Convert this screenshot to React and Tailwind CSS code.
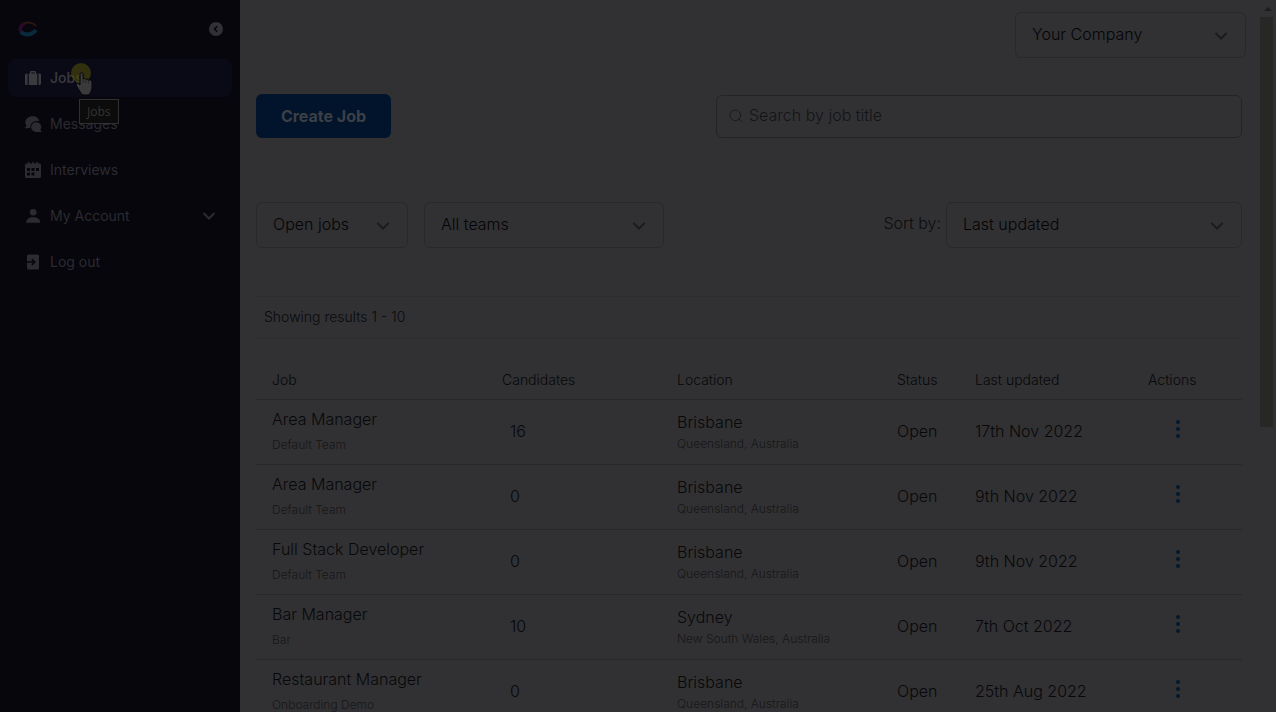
import React, { useState } from 'react';
import { Search } from 'lucide-react';

const SuitcaseIcon = () => (
    <svg viewBox="0 0 18 18" className="w-[18px] h-[18px]" fill="currentColor" aria-hidden="true">
        <path fillRule="evenodd" d="M4.700 4.500H6V3.300C6 2.500 6.500 2 7.300 2h3.400c.8 0 1.300.5 1.300 1.300v1.200h1.300V16H4.700zM7.500 4.500h3v-1h-3z" />
        <path d="M1 6a1.500 1.500 0 0 1 1.500-1.500h1V16h-1A1.500 1.500 0 0 1 1 14.500zM14.500 4.500h1A1.500 1.500 0 0 1 17 6v8.500a1.500 1.500 0 0 1-1.500 1.500h-1z" />
    </svg>
);

const MessagesIcon = () => (
    <svg viewBox="0 0 18 18" className="w-[18px] h-[18px]" fill="currentColor" aria-hidden="true">
        <path d="M8.800 1.200c3.400 0 6 2.100 6.600 5-5.400-1.400-9.400 2-9.100 6.800-.9 0-1.900.2-2.800.2H.9l-.1-.6c.9-.6 1.400-1.200 1.500-2.200-.6-1-1-2-1-3.100 0-3.400 3.400-6.100 7.500-6.100z" />
        <path d="M12.200 7.300c2.900 0 5 2.100 5 4.700 0 1-.3 1.800-.8 2.500.1.800.5 1.400 1.200 2l-.1.500h-5.300c-2.800 0-5-2.200-5-4.900 0-2.600 2.200-4.800 5-4.800z" />
    </svg>
);

const CalendarIcon = () => (
    <svg viewBox="0 0 18 18" className="w-[18px] h-[18px]" fill="currentColor" aria-hidden="true">
        <path fillRule="evenodd" d="M4 1h1.500v1.500h2.700V1h1.600v1.500h2.700V1H14v1.500h1.500A1.500 1.500 0 0 1 17 4v11.500a1.500 1.500 0 0 1-1.500 1.500h-13A1.500 1.500 0 0 1 1 15.500V4a1.500 1.500 0 0 1 1.500-1.500H4zM3 7v3h3V7zm4.500 0v3h3V7zM12 7v3h3V7zM3 11.500v3h3v-3zm4.500 0v3h3v-3z" />
    </svg>
);

const PersonIcon = () => (
    <svg viewBox="0 0 18 18" className="w-[18px] h-[18px]" fill="currentColor" aria-hidden="true">
        <circle cx="9.200" cy="5.300" r="3.300" />
        <path d="M2.200 15.800c0-3.600 2.600-5.600 7-5.600s7 2 7 5.600z" />
    </svg>
);

const LogoutIcon = () => (
    <svg viewBox="0 0 18 18" className="w-[18px] h-[18px]" aria-hidden="true">
        <path fill="currentColor" d="M4.500 1.500h9A1.500 1.500 0 0 1 15 3v12a1.500 1.500 0 0 1-1.500 1.500h-9A1.500 1.500 0 0 1 3 15V3a1.500 1.500 0 0 1 1.500-1.500z" />
        <path d="M3 9h7.500M7.800 6l3 3-3 3" fill="none" stroke="#06060c" strokeWidth="1.600" />
    </svg>
);

const Chevron = ({ className }) => (
    <svg viewBox="0 0 14 8" className={`w-[14px] h-2 ${className}`} fill="none" stroke="currentColor" strokeWidth="2" aria-hidden="true">
        <path d="M1.500 1L7 6.500 12.500 1" />
    </svg>
);

const Logo = () => (
    <svg viewBox="0 0 20 16" className="w-5 h-4" fill="none" aria-label="Home">
        <path d="M3.500 11.500C1 8 2.500 4 7 2.500" stroke="#2a0a28" strokeWidth="3.500" />
        <path d="M6 2.500c4-1.700 9-1 12 2.600" stroke="#2c160f" strokeWidth="2" />
        <path d="M3 10.800c3.500 4 11.500 3.500 15-1.800" stroke="#0a2a3c" strokeWidth="4" />
    </svg>
);

const navItems = [
    { label: 'Jobs', icon: <SuitcaseIcon />, active: true },
    { label: 'Messages', icon: <MessagesIcon /> },
    { label: 'Interviews', icon: <CalendarIcon /> },
    { label: 'My Account', icon: <PersonIcon />, expandable: true },
    { label: 'Log out', icon: <LogoutIcon /> },
];

const jobs = [
    { id: 1, title: 'Area Manager', team: 'Default Team', candidates: 16, city: 'Brisbane', region: 'Queensland, Australia', status: 'Open', updated: '17th Nov 2022' },
    { id: 2, title: 'Area Manager', team: 'Default Team', candidates: 0, city: 'Brisbane', region: 'Queensland, Australia', status: 'Open', updated: '9th Nov 2022' },
    { id: 3, title: 'Full Stack Developer', team: 'Default Team', candidates: 0, city: 'Brisbane', region: 'Queensland, Australia', status: 'Open', updated: '9th Nov 2022' },
    { id: 4, title: 'Bar Manager', team: 'Bar', candidates: 10, city: 'Sydney', region: 'New South Wales, Australia', status: 'Open', updated: '7th Oct 2022' },
    { id: 5, title: 'Restaurant Manager', team: 'Onboarding Demo', candidates: 0, city: 'Brisbane', region: 'Queensland, Australia', status: 'Open', updated: '25th Aug 2022' },
];

const Select = ({ id, label, option, className }) => (
    <div className={`relative ${className}`}>
        <select id={id} aria-label={label} className="w-full h-[46px] pl-4 pr-10 pb-[3px] appearance-none rounded-md border border-[#29292b] bg-transparent text-base text-[#040406]">
            <option>{option}</option>
        </select>
        <Chevron className="absolute right-[18px] top-5 pointer-events-none text-[#1b1b1d]" />
    </div>
);

const Sidebar = () => (
    <aside className="w-60 shrink-0 bg-[#06060c] text-[#2b2b31]">
        <div className="h-[59px] pl-[18px] pr-[17px] pb-0.5 flex items-center justify-between">
            <a href="#home"><Logo /></a>
            <button type="button" aria-label="Collapse menu">
                <svg viewBox="0 0 14 14" className="w-[14px] h-[14px]" aria-hidden="true">
                    <circle cx="7" cy="7" r="7" fill="#303035" />
                    <path d="M8.200 4.300L5.500 7l2.700 2.700" fill="none" stroke="#06060c" strokeWidth="1.500" />
                </svg>
            </button>
        </div>
        <nav className="px-2 flex flex-col gap-2">
            {navItems.map((item) => (
                <a
                    key={item.label}
                    href={`#${item.label}`}
                    className={`h-[38px] px-4 flex items-center rounded-lg text-sm ${item.active ? 'bg-[#0a0a17] text-[#3a3a3f] font-medium' : ''}`}
                >
                    <span className="w-[18px] mr-2 flex justify-center">{item.icon}</span>
                    {item.label}
                    {item.expandable && <Chevron className="ml-auto" />}
                </a>
            ))}
        </nav>
    </aside>
);

// Pointer, click highlight and native tooltip floating over the menu
const Pointer = () => (
    <>
        <div className="absolute left-[71px] top-[63px] w-5 h-5 rounded-full bg-[#4c4a0a]/60 pointer-events-none" />
        <svg viewBox="0 0 18 24" className="absolute left-[75px] top-[72px] w-[18px] h-6 pointer-events-none" aria-hidden="true">
            <path
                d="M5 2.200C5 .2 8.200.2 8.200 2.200v4.600c.8-.7 2.300-.4 2.700.7.800-.6 2.200-.3 2.600.8 1.300-.7 3.500-.2 3.500 1.700v5.500c0 2.500-1 3.500-1.700 5-.5 1.800-1.300 2.500-3 2.500H9c-1.700 0-2.500-1-3.300-2.500-.9-1.700-2.700-3.500-4.200-6.500-1-2.100 1-3.500 2.500-2l1 1z"
                fill="#3a3a3b"
                stroke="#050508"
            />
            <path d="M8.200 7v4M10.900 8v3M13.500 9v2.500" stroke="#1c1c20" strokeWidth="0.700" />
        </svg>
        <div role="tooltip" className="absolute left-[79px] top-[99px] px-[7px] h-[25px] leading-6 border border-[#303030] bg-[#0c0c0c] text-xs text-[#343434] font-['Open_Sans',sans-serif]">Jobs</div>
    </>
);

const JobsTable = () => (
    <table className="w-full table-fixed text-left text-[#08080a]">
        <thead>
            <tr className="h-[60px] border-b border-[#28282a] text-sm">
                <th className="w-[230px] px-4 pt-[22px] font-light">Job</th>
                <th className="w-[175px] px-4 pt-[22px] font-light">Candidates</th>
                <th className="w-[220px] px-4 pt-[22px] font-light">Location</th>
                <th className="w-[78px] pl-4 pt-[22px] font-light">Status</th>
                <th className="w-[173px] px-4 pt-[22px] font-light">Last updated</th>
                <th className="w-[110px] px-4 pt-[22px] font-light">Actions</th>
            </tr>
        </thead>
        <tbody>
            {jobs.map((job) => (
                <tr key={job.id} className="h-[65px] border-b border-[#28282a] whitespace-nowrap">
                    <td className="px-4 pb-0.5">
                        <p className="pb-1">{job.title}</p>
                        <p className="text-xs leading-5 text-[#161618]">{job.team}</p>
                    </td>
                    <td className="pl-6 pb-0.5">{job.candidates}</td>
                    <td className="px-4 pt-0.5">
                        <p className="leading-5">{job.city}</p>
                        <p className="pt-0.5 text-xs leading-5 text-[#161618]">{job.region}</p>
                    </td>
                    <td className="pl-4 pb-0.5">{job.status}</td>
                    <td className="px-4 pb-0.5">{job.updated}</td>
                    <td className="px-4 pb-0.5">
                        <button type="button" aria-label={`Actions for ${job.title}`} className="block ml-7 mb-1">
                            <svg viewBox="0 0 4 20" className="w-1 h-5" fill="#04182d" aria-hidden="true">
                                <circle cx="2" cy="3" r="2" />
                                <circle cx="2" cy="10" r="2" />
                                <circle cx="2" cy="17" r="2" />
                            </svg>
                        </button>
                    </td>
                </tr>
            ))}
        </tbody>
    </table>
);

const App = () => {
    const [query, setQuery] = useState('');

    return (
        <div className="relative h-screen flex overflow-hidden bg-[#313133] font-[Inter,sans-serif]">
            <Sidebar />

            <main className="flex-1 min-w-0 overflow-hidden font-light">
                <header className="pt-3 pr-[14px] flex justify-end">
                    <Select id="company" label="Company" option="Your Company" className="w-[231px]" />
                </header>

                <div className="pl-4 pr-[18px]">
                    <div className="mt-9 flex items-center justify-between">
                        <button type="button" className="w-[135px] h-11 rounded-md bg-[#02142b] text-base font-bold text-[#3c4046]">Create Job</button>
                        <div className="relative w-[526px]">
                            <Search className="absolute left-3 top-[13px] w-4 h-4 text-[#1b1b1d]" strokeWidth={1.5} />
                            <input
                                type="search"
                                aria-label="Search by job title"
                                placeholder="Search by job title"
                                value={query}
                                onChange={(e) => setQuery(e.target.value)}
                                className="block w-full h-[43px] pl-8 pr-4 pb-0.5 rounded-md border border-[#242426] bg-transparent text-base text-[#09090b] placeholder:text-[#141416]"
                            />
                        </div>
                    </div>

                    <div className="mt-16 flex items-center">
                        <Select id="job-status" label="Job status" option="Open jobs" className="w-[152px]" />
                        <Select id="team" label="Team" option="All teams" className="ml-4 w-60" />
                        <label htmlFor="sort" className="ml-auto mr-[5px] pb-1 text-base text-[#0c0c0e]">Sort by:</label>
                        <Select id="sort" option="Last updated" className="w-[296px]" />
                    </div>

                    <div className="mt-12 h-[43px] px-2 pb-0.5 flex items-center border-y border-[#2c2c2e] text-sm text-[#0a0a0c]">
                        Showing results 1 - 10
                    </div>

                    <JobsTable />
                </div>
            </main>

            <div className="w-4 shrink-0 flex flex-col" aria-hidden="true">
                <div className="h-[17px] flex items-center justify-center">
                    <div className="border-x-4 border-x-transparent border-b-4 border-b-[#1c1c1e]" />
                </div>
                <div className="w-[13px] h-3/5 max-h-[410px] bg-[#272726]" />
            </div>

            <Pointer />
        </div>
    );
};

export default App;
